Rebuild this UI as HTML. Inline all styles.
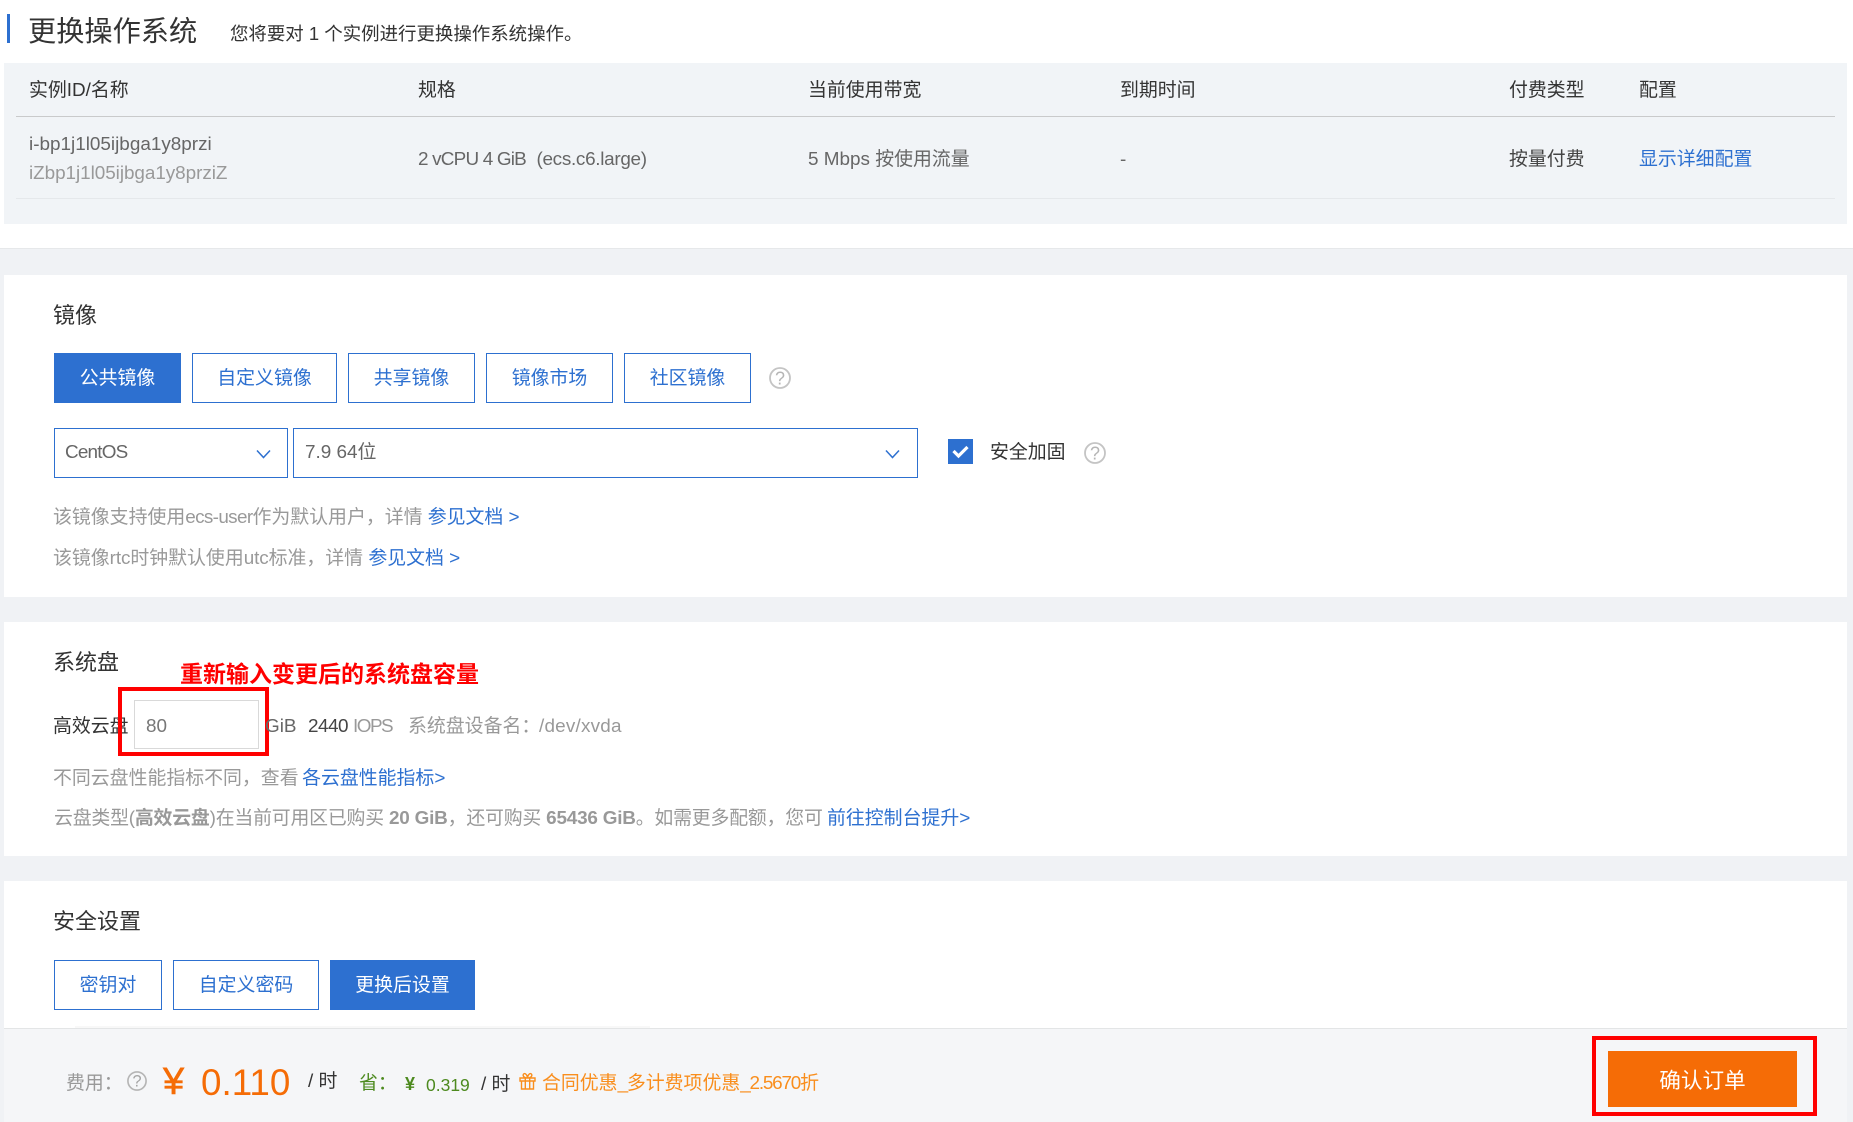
<!DOCTYPE html>
<html lang="zh"><head><meta charset="utf-8"><title>更换操作系统</title>
<style>
html,body{margin:0;padding:0}
body{width:1853px;height:1122px;position:relative;overflow:hidden;background:#f0f2f5;font-family:"Liberation Sans","Noto Sans CJK SC",sans-serif;font-size:18.9px;color:#333}
.b{position:absolute;box-sizing:border-box}
.t{position:absolute;white-space:nowrap;line-height:30px;height:30px;margin-top:1px}
.btn{position:absolute;box-sizing:border-box;height:50px;border:1.5px solid #2d70d0;color:#2d70d0;background:#fff;text-align:center;line-height:49px;white-space:nowrap}
.on{background:#2d70d0;color:#fff}
.g{color:#999}.l{color:#2d70d0}
svg{position:absolute;overflow:visible}
</style></head><body>
<div class="b" style="left:0;top:0;width:1853px;height:249px;background:#fff;border-bottom:1px solid #e6e8ea"></div>
<div class="b" style="left:7px;top:14px;width:3px;height:29px;background:#2d70d0"></div>
<div class="t" style="left:28px;top:15px;font-size:28.2px;color:#333">更换操作系统</div>
<div class="t" style="left:230px;top:18px;font-size:18.45px;color:#333">您将要对 <span style="color:#333">1</span> 个实例进行更换操作系统操作。</div>

<div class="b" style="left:4px;top:63px;width:1843px;height:161px;background:#f1f4f7"></div>
<div class="b" style="left:16px;top:116px;width:1819px;height:1px;background:#c9cacb"></div>
<div class="b" style="left:16px;top:198px;width:1819px;height:1px;background:#e5e8eb"></div>
<div class="t" style="left:29px;top:75px">实例ID/名称</div>
<div class="t" style="left:418px;top:75px">规格</div>
<div class="t" style="left:808px;top:75px">当前使用带宽</div>
<div class="t" style="left:1120px;top:75px">到期时间</div>
<div class="t" style="left:1509px;top:75px">付费类型</div>
<div class="t" style="left:1639px;top:75px">配置</div>
<div class="t" style="left:29px;top:129px;color:#666">i-bp1j1l05ijbga1y8przi</div>
<div class="t g" style="left:29px;top:158px;letter-spacing:-.05px">iZbp1j1l05ijbga1y8prziZ</div>
<div class="t" style="left:418px;top:144px;color:#666"><span style="letter-spacing:-.8px">2 vCPU 4 GiB</span> &nbsp;<span style="letter-spacing:-.3px">(ecs.c6.large)</span></div>
<div class="t" style="left:808px;top:144px;color:#666">5 Mbps 按使用流量</div>
<div class="t" style="left:1120px;top:144px;color:#666">-</div>
<div class="t" style="left:1509px;top:144px;color:#444">按量付费</div>
<div class="t l" style="left:1639px;top:144px">显示详细配置</div>

<div class="b" style="left:4px;top:275px;width:1843px;height:322px;background:#fff"></div>
<div class="t" style="left:53px;top:300px;font-size:22px">镜像</div>
<div class="btn on" style="left:54px;top:353px;width:127px">公共镜像</div>
<div class="btn" style="left:192px;top:353px;width:145px">自定义镜像</div>
<div class="btn" style="left:348px;top:353px;width:127px">共享镜像</div>
<div class="btn" style="left:486px;top:353px;width:127px">镜像市场</div>
<div class="btn" style="left:624px;top:353px;width:127px">社区镜像</div>
<svg style="left:769px;top:367px" width="22" height="22" viewBox="0 0 22 22"><circle cx="11" cy="11" r="10" fill="none" stroke="#c4c4c4" stroke-width="1.8"/><text x="11" y="17.3" font-size="18" text-anchor="middle" fill="#b5b5b5" font-family="Liberation Sans">?</text></svg>
<div class="b" style="left:54px;top:428px;width:234px;height:50px;border:1.5px solid #2d70d0;background:#fff"></div>
<div class="b" style="left:293px;top:428px;width:625px;height:50px;border:1.5px solid #2d70d0;background:#fff"></div>
<div class="t" style="left:65px;top:437px;color:#666;letter-spacing:-.8px">CentOS</div>
<div class="t" style="left:305px;top:437px;color:#666">7.9 64位</div>
<svg style="left:256px;top:449px" width="15" height="10" viewBox="0 0 15 10"><path d="M1 1.5L7.5 8.5L14 1.5" fill="none" stroke="#2d70d0" stroke-width="1.5"/></svg>
<svg style="left:885px;top:449px" width="15" height="10" viewBox="0 0 15 10"><path d="M1 1.5L7.5 8.5L14 1.5" fill="none" stroke="#2d70d0" stroke-width="1.5"/></svg>
<div class="b" style="left:948px;top:439px;width:25px;height:25px;background:#2d70d0"></div>
<svg style="left:948px;top:439px" width="25" height="25" viewBox="0 0 25 25"><path d="M5.5 12L10.5 17L19.5 8" fill="none" stroke="#fff" stroke-width="3.2"/></svg>
<div class="t" style="left:990px;top:437px">安全加固</div>
<svg style="left:1084px;top:442px" width="22" height="22" viewBox="0 0 22 22"><circle cx="11" cy="11" r="10" fill="none" stroke="#c4c4c4" stroke-width="1.8"/><text x="11" y="17.3" font-size="18" text-anchor="middle" fill="#b5b5b5" font-family="Liberation Sans">?</text></svg>
<div class="t g" style="left:53px;top:502px">该镜像支持使用<span style="letter-spacing:-.65px">ecs-user</span>作为默认用户，详情 <span class="l">参见文档 &gt;</span></div>
<div class="t g" style="left:53px;top:543px">该镜像<span style="letter-spacing:-.1px">rtc</span>时钟默认使用<span style="letter-spacing:-.1px">utc</span>标准，详情 <span class="l">参见文档 &gt;</span></div>

<div class="b" style="left:4px;top:622px;width:1843px;height:234px;background:#fff"></div>
<div class="t" style="left:53px;top:647px;font-size:22px">系统盘</div>
<div class="t" style="left:180px;top:658px;font-size:23px;font-weight:700;color:#f00">重新输入变更后的系统盘容量</div>
<div class="t" style="left:53px;top:711px">高效云盘</div>
<div class="b" style="left:134px;top:700px;width:125px;height:49px;border:1px solid #d9d9d9;background:#fff"></div>
<div class="t" style="left:146px;top:711px;color:#777">80</div>
<div class="b" style="left:118px;top:687px;width:151px;height:69px;border:4px solid #f00"></div>
<div class="t" style="left:265px;top:711px;color:#666">GiB</div>
<div class="t" style="left:308px;top:711px;color:#444;letter-spacing:-.5px">2440</div>
<div class="t g" style="left:353px;top:711px;letter-spacing:-1.5px">IOPS</div>
<div class="t g" style="left:408px;top:711px">系统盘设备名：</div>
<div class="t g" style="left:539px;top:711px;letter-spacing:.2px">/dev/xvda</div>
<div class="t g" style="left:53px;top:763px">不同云盘性能指标不同，查看<span class="l" style="margin-left:3.5px">各云盘性能指标&gt;</span></div>
<div class="t g" style="left:54px;top:803px;letter-spacing:-.2px">云盘类型(<b>高效云盘</b>)在当前可用区已购买 <b>20 GiB</b>，还可购买 <b>65436 GiB</b>。如需更多配额，您可</div>
<div class="t l" style="left:827px;top:803px">前往控制台提升&gt;</div>

<div class="b" style="left:4px;top:881px;width:1843px;height:150px;background:#fff"></div>
<div class="t" style="left:53px;top:906px;font-size:22px">安全设置</div>
<div class="btn" style="left:54px;top:960px;width:108px">密钥对</div>
<div class="btn" style="left:173px;top:960px;width:146px">自定义密码</div>
<div class="btn on" style="left:330px;top:960px;width:145px">更换后设置</div>
<div class="b" style="left:75px;top:1026px;width:575px;height:2px;background:#f8f8f8"></div>

<div class="b" style="left:4px;top:1028px;width:1843px;height:94px;background:#f5f6f8;border-top:1px solid #e3e5e6"></div>
<div class="t g" style="left:66px;top:1068px">费用：</div>
<svg style="left:127px;top:1071px" width="20" height="20" viewBox="0 0 22 22"><circle cx="11" cy="11" r="10" fill="none" stroke="#b5b5b5" stroke-width="1.8"/><text x="11" y="17.3" font-size="18" text-anchor="middle" fill="#a5a5a5" font-family="Liberation Sans">?</text></svg>
<div class="t" style="left:163px;top:1066px;font-size:38px;color:#f56c06;-webkit-text-stroke:.6px #f56c06">¥</div>
<div class="t" style="left:201px;top:1067px;font-size:36.8px;color:#f56c06">0.110</div>
<div class="t" style="left:308px;top:1066px;color:#333">/ 时</div>
<div class="t" style="left:359px;top:1068px;color:#4d8a1f">省：</div>
<div class="t" style="left:405px;top:1068px;font-size:18px;color:#4d8a1f;font-weight:700">¥</div>
<div class="t" style="left:426px;top:1069px;font-size:17.5px;color:#4d8a1f">0.319</div>
<div class="t" style="left:481px;top:1069px;color:#333">/ 时</div>
<svg style="left:519px;top:1072px" width="17" height="18" viewBox="0 0 17 18"><path d="M1 6H16V9H1ZM2.5 9V17H14.5V9M6.3 6V17M10.7 6V17M8.5 6C6 6 3.8 4.6 4.2 2.8C4.7 .6 7.8 1.2 8.5 6C9.2 1.2 12.3 .6 12.8 2.8C13.2 4.6 11 6 8.5 6Z" fill="none" stroke="#f98e1d" stroke-width="1.4"/></svg>
<div class="t" style="left:542px;top:1068px;color:#f98e1d">合同优惠<span style="letter-spacing:-1.2px">_</span>多计费项优惠<span style="letter-spacing:-1.2px">_2.5670</span>折</div>

<div class="b" style="left:1608px;top:1051px;width:189px;height:56px;background:#f56c06;color:#fff;font-size:21.6px;line-height:60px;text-align:center">确认订单</div>
<div class="b" style="left:1592px;top:1036px;width:225px;height:80px;border:4px solid #f00"></div>
</body></html>
